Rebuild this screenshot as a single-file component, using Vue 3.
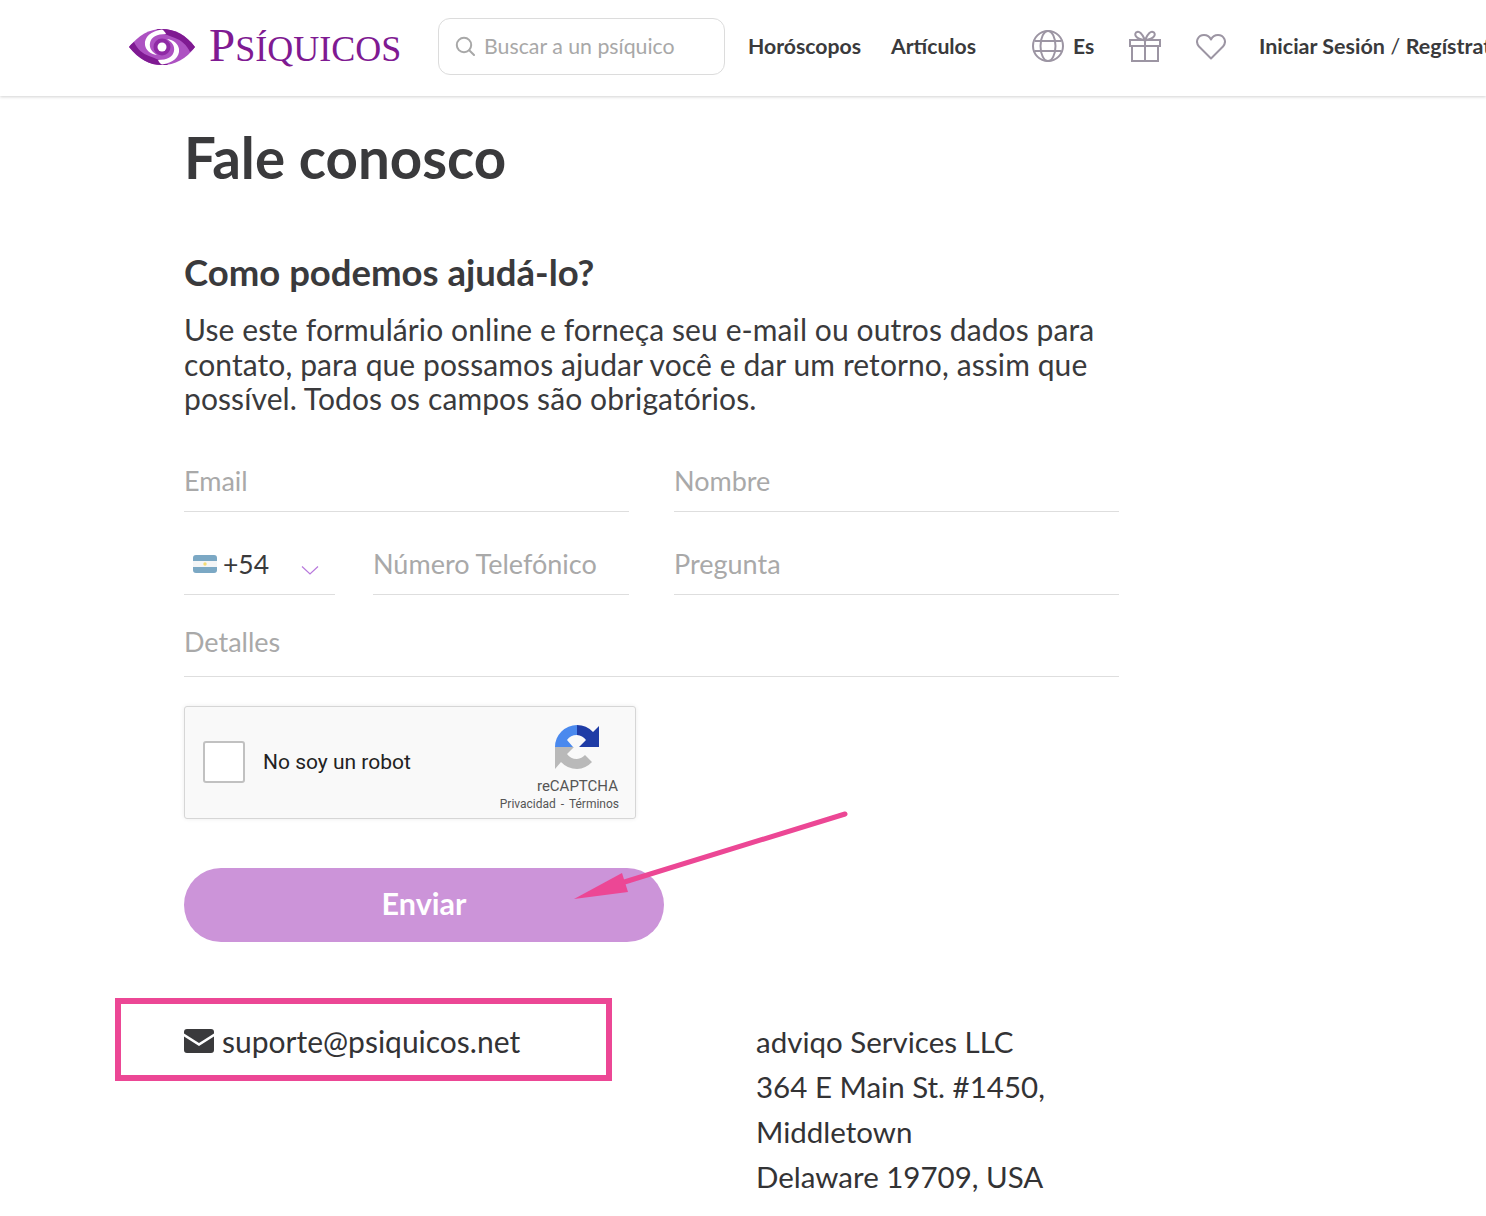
<script setup>
const leftFields = ["Email", "Nombre"];
const address = ["adviqo Services LLC", "364 E Main St. #1450,", "Middletown", "Delaware 19709, USA"];
</script>

<template>
  <div class="page">
    <header class="header">
      <a class="logo">
        <svg class="eye" viewBox="0 0 66 38" width="66" height="38">
          <path d="M0 19C10 7 20 1 33 1c13 0 24 6 33 18-9 12-20 18-33 18C20 37 10 31 0 19z" fill="#ad52c2" />
          <path d="M27 1.300C29 1.100 31 1 33 1c13 0 24 6 33 18-1.500 2-3 3.500-5 5-3-7-9-12-15-14-7-3-14-5-19-9z" fill="#7f1a92" />
          <path d="M39 36.700c-2 .2-4 .3-6 .3C20 37 10 31 0 19c1.500-2 3-3.500 5-5 3 7 9 12 15 14 7 3 14 5 19 9z" fill="#7f1a92" />
          <path d="M33 1.500C22 3 15 9 16 17c.7 5 5 9 12 10-5-3-8-7-7-12 1-6 7-9 16-9-1-2-2-3.500-4-4.500z" fill="#fff" />
          <path d="M33 36.500c11-1.500 18-7.500 17-15.500-.7-5-5-9-12-10 5 3 8 7 7 12-1 6-7 9-16 9 1 2 2 3.500 4 4.500z" fill="#fff" />
          <circle cx="33" cy="19" r="8.500" fill="#8f2aa5" />
          <circle cx="33" cy="19" r="4.500" fill="#fff" />
        </svg>
        <span class="logo-text">P<span class="logo-rest">síquicos</span></span>
      </a>
      <div class="search">
        <svg viewBox="0 0 20 20" width="20" height="20" fill="none" stroke="#a8a8a8" stroke-width="2">
          <circle cx="9" cy="9" r="7.200" />
          <path d="M14.200 14.200 19 19" stroke-linecap="round" />
        </svg>
        <span>Buscar a un psíquico</span>
      </div>
      <nav class="nav">
        <a>Horóscopos</a>
        <a>Artículos</a>
      </nav>
      <div class="tools">
        <div class="lang">
          <svg viewBox="0 0 32 32" width="32" height="32" fill="none" stroke="#9c95a3" stroke-width="2">
            <circle cx="16" cy="16" r="15" />
            <ellipse cx="16" cy="16" rx="7.500" ry="15" />
            <path d="M2.500 11h27M2.500 21h27" />
          </svg>
          <b>Es</b>
        </div>
        <svg class="gift" viewBox="0 0 32 32" width="32" height="32" fill="none" stroke="#9c95a3" stroke-width="2">
          <path d="M1 10h30v6H1zM3 16h26v15H3zM16 10v21M16 10c-3-7-6-9-8-8-3 1-3 7 8 8zM16 10c3-7 6-9 8-8 3 1 3 7-8 8z" />
        </svg>
        <svg class="heart" viewBox="0 0 30 26" width="30" height="26" fill="none" stroke="#9c95a3" stroke-width="2">
          <path d="M15 24.500 3 12.500C-1.500 7 2.500 1 8 1c3 0 5.500 1.500 7 4.500C16.500 2.500 19 1 22 1c5.500 0 9.500 6 5 11.500z" stroke-linejoin="round" />
        </svg>
        <div class="login"><b>Iniciar Sesión</b> / <b>Regístrate</b></div>
      </div>
    </header>

    <main class="main">
      <h1>Fale conosco</h1>
      <h2>Como podemos ajudá-lo?</h2>
      <p class="intro">Use este formulário online e forneça seu e-mail ou outros dados para contato, para que possamos ajudar você e dar um retorno, assim que possível. Todos os campos são obrigatórios.</p>

      <form class="form">
        <div class="row first">
          <div v-for="label in leftFields" :key="label" class="field">{{ label }}</div>
        </div>
        <div class="row second">
          <div class="phone">
            <div class="field code">
              <svg class="flag" viewBox="0 0 24 18" width="24" height="18">
                <rect width="24" height="18" rx="3" fill="#f4f5f6" />
                <path d="M0 6V3a3 3 0 0 1 3-3h18a3 3 0 0 1 3 3v3z" fill="#7ba8c4" />
                <path d="M0 12v3a3 3 0 0 0 3 3h18a3 3 0 0 0 3-3v-3z" fill="#7ba8c4" />
                <circle cx="12" cy="9" r="1.700" fill="#f4dc74" />
              </svg>
              <span class="code-num">+54</span>
              <svg class="chev" viewBox="0 0 18 10" width="18" height="10" fill="none" stroke="#b879dc" stroke-width="1.200">
                <path d="M1 1.500 9 9l8-7.500" />
              </svg>
            </div>
            <div class="field number">Número Telefónico</div>
          </div>
          <div class="field">Pregunta</div>
        </div>
        <div class="field details">Detalles</div>
      </form>

      <div class="captcha">
        <div class="check"></div>
        <span class="robot">No soy un robot</span>
        <div class="brand">
          <svg viewBox="0 0 46 46" width="46" height="46">
            <path d="M1 23A22 22 0 0 1 23 1v10a12 12 0 0 0-10 5l6 7z" fill="#4a89ee" />
            <path d="M23 1a22 22 0 0 1 16 7l6-6v21H25l7-7a13 13 0 0 0-9-5z" fill="#1f3ca6" />
            <path d="M1 23h19l-7 7a12 12 0 0 0 10 5 12 12 0 0 0 8-4l7 7a22 22 0 0 1-15 7 22 22 0 0 1-16-7l-6 7z" fill="#b9b9b9" />
          </svg>
          <span class="re">reCAPTCHA</span>
          <span class="terms">Privacidad - Términos</span>
        </div>
      </div>

      <button class="send" type="button">Enviar</button>

      <div class="contact">
        <div class="mail">
          <svg viewBox="0 0 30 24" width="30" height="24">
            <path d="M3 0h24a3 3 0 0 1 3 3v1.500L15 14 0 4.500V3a3 3 0 0 1 3-3z" fill="#3a3a3c" />
            <path d="M0 7.500 15 17l15-9.500V21a3 3 0 0 1-3 3H3a3 3 0 0 1-3-3z" fill="#3a3a3c" />
          </svg>
          <span>suporte@psiquicos.net</span>
        </div>
        <address class="address">
          <div v-for="line in address" :key="line">{{ line }}</div>
        </address>
      </div>
    </main>

    <!-- annotations drawn over the page -->
    <svg class="arrow" viewBox="0 0 1486 1216" width="1486" height="1216">
      <path d="M845 814 618 884" stroke="#ec4795" stroke-width="5" stroke-linecap="round" fill="none" />
      <path d="M574 899 622 873 628 892z" fill="#ec4795" />
    </svg>
    <div class="mark"></div>
  </div>
</template>

<style>
html, body {
  margin: 0;
  background: #fff;
}
</style>

<style scoped>
.page {
  position: relative;
  width: 1486px;
  height: 1216px;
  overflow: hidden;
  font-family: Lato, "Open Sans", sans-serif;
  color: #3a3a3c;
}

.header {
  display: flex;
  align-items: center;
  height: 96px;
  padding-left: 129px;
  box-sizing: border-box;
  box-shadow: 0 1px 3px rgba(0, 0, 0, 0.18);
  white-space: nowrap;
}

.logo {
  display: flex;
  align-items: center;
  width: 309px;
  flex: none;
  margin-top: -3px;
}

.eye {
  margin-right: 14px;
}

.logo-text {
  font-family: "Liberation Serif", serif;
  font-size: 47px;
  line-height: 50px;
  color: #7f1a92;
}

.logo-rest {
  font-size: 36px;
  text-transform: uppercase;
}

.search {
  display: flex;
  align-items: center;
  gap: 9px;
  width: 287px;
  height: 57px;
  padding-left: 16px;
  box-sizing: border-box;
  border: 1px solid #dcdcdc;
  border-radius: 12px;
  font-size: 21.300px;
  color: #a8a8a8;
  flex: none;
  margin-top: -4px;
}

.nav {
  display: flex;
  gap: 30px;
  margin-left: 23px;
  margin-top: -5px;
  font-size: 21.200px;
  font-weight: 700;
  width: 284px;
  flex: none;
}

.tools {
  display: flex;
  align-items: center;
  margin-top: -5px;
  font-size: 21px;
}

.lang {
  display: flex;
  align-items: center;
  gap: 9px;
  width: 97px;
}

.gift {
  margin-right: 35px;
}

.heart {
  margin-right: 33px;
  margin-top: 2px;
}

.login {
  font-size: 21.500px;
}

.main {
  padding-left: 184px;
  width: 935px;
}

h1 {
  margin: 28px 0 0;
  font-size: 56.500px;
  line-height: 66px;
  font-weight: 700;
}

h2 {
  margin: 60px 0 0;
  font-size: 36.500px;
  line-height: 44px;
  font-weight: 700;
}

.intro {
  margin: 18px 0 0;
  font-size: 30px;
  line-height: 34.500px;
  letter-spacing: 0.1px;
  width: 935px;
}

.form {
  margin-top: 32px;
}

.row {
  display: grid;
  grid-template-columns: 445px 445px;
  column-gap: 45px;
}

.field {
  display: flex;
  align-items: center;
  height: 83px;
  box-sizing: border-box;
  padding-top: 22px;
  border-bottom: 1px solid #dedede;
  font-size: 27px;
  color: #a9a9a9;
}

.first .field {
  height: 64px;
  padding-top: 2px;
}

.phone {
  display: flex;
  gap: 38px;
}

.code {
  width: 151px;
  flex: none;
  padding-left: 9px;
  color: #3a3a3c;
}

.code-num {
  margin-left: 6px;
  font-size: 26.500px;
}

.chev {
  margin-left: 32px;
  margin-top: 12px;
}

.number {
  flex: 1;
}

.details {
  height: 82px;
  width: 935px;
  padding-top: 12px;
}

.captcha {
  display: flex;
  align-items: center;
  width: 452px;
  height: 113px;
  margin-top: 29px;
  padding-left: 18px;
  box-sizing: border-box;
  background: #f9f9f9;
  border: 1px solid #d6d6d6;
  border-radius: 3px;
  box-shadow: 0 0 4px rgba(0, 0, 0, 0.08);
  font-family: Roboto, sans-serif;
}

.check {
  width: 42px;
  height: 42px;
  box-sizing: border-box;
  background: #fff;
  border: 2px solid #c1c1c1;
  border-radius: 3px;
}

.robot {
  margin-left: 18px;
  font-size: 21px;
  color: #222;
  width: 236px;
  white-space: nowrap;
}

.brand {
  display: flex;
  flex-direction: column;
  align-items: flex-end;
  width: 120px;
  margin-top: 11px;
  color: #555;
  white-space: nowrap;
}

.brand svg {
  margin: 0 19px 6px 0;
}

.re {
  font-size: 15px;
  line-height: 20px;
  margin-right: 1px;
}

.terms {
  font-size: 12px;
  line-height: 16px;
  word-spacing: 2px;
}

.send {
  display: block;
  width: 480px;
  height: 74px;
  margin-top: 49px;
  padding: 0 0 3px;
  background: #cc94d9;
  border: none;
  border-radius: 37px;
  color: #fff;
  font-family: inherit;
  font-size: 30.500px;
  font-weight: 700;
}

.contact {
  display: flex;
  margin-top: 77px;
  font-size: 29.500px;
  line-height: 45px;
  color: #333335;
}

.mail {
  display: flex;
  align-items: center;
  align-self: flex-start;
  gap: 8px;
  width: 572px;
  height: 45px;
  font-size: 30px;
}

.address {
  font-style: normal;
}

.arrow {
  position: absolute;
  left: 0;
  top: 0;
  pointer-events: none;
}

.mark {
  position: absolute;
  left: 115px;
  top: 998px;
  width: 497px;
  height: 83px;
  box-sizing: border-box;
  border: 6px solid #ec4795;
}
</style>
